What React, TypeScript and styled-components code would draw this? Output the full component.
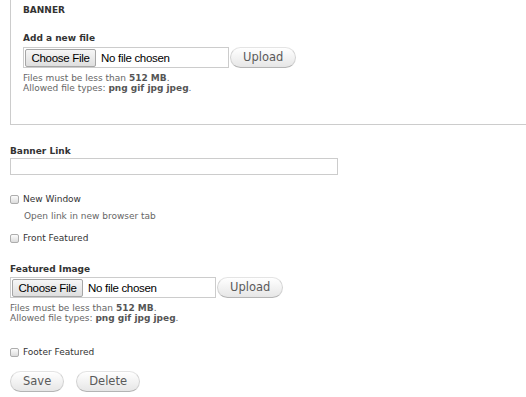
import React from 'react';
import styled, { createGlobalStyle } from 'styled-components';

const GlobalStyle = createGlobalStyle`
    body {
        margin: 0;
        background: #fff;
        font-family: 'DejaVu Sans', Verdana, sans-serif;
        font-size: 9px;
        color: #333;
        overflow: hidden;
    }
`;

const Page = styled.div`
    padding-left: 10px;
`;

const Fieldset = styled.section`
    border-left: 1px solid #ccc;
    border-bottom: 1px solid #ccc;
    padding: 4px 0 31px 12px;
`;

const Legend = styled.div`
    font-weight: bold;
    line-height: 12px;
    text-transform: uppercase;
    color: #333;
`;

const Label = styled.div<{ $top?: number; $bottom?: number }>`
    font-weight: bold;
    line-height: 12px;
    color: #333;
    margin-top: ${(p) => p.$top ?? 0}px;
    margin-bottom: ${(p) => p.$bottom ?? 0}px;
`;

const FileRow = styled.div`
    display: flex;
    align-items: center;
    gap: 1px;
`;

const FileBox = styled.div`
    box-sizing: border-box;
    width: 206px;
    height: 21px;
    border: 1px solid #ccc;
    padding: 0 1px;
    display: flex;
    align-items: center;
    gap: 5px;
    font-family: 'Liberation Sans', Arial, sans-serif;
    font-size: 11.5px;
    letter-spacing: -0.3px;
    color: #000;
`;

const FileButton = styled.span`
    box-sizing: border-box;
    width: 71px;
    height: 18px;
    display: flex;
    align-items: center;
    justify-content: center;
    border: 1px solid #a6a6a6;
    border-radius: 2px;
    background: linear-gradient(#f6f6f6, #dedede);
`;

const PillButton = styled.button`
    box-sizing: border-box;
    height: 21px;
    padding: 0 12px;
    border: 1px solid #e4e4e4;
    border-bottom-color: #b4b4b4;
    border-left-color: #d2d2d2;
    border-right-color: #d2d2d2;
    border-radius: 15px;
    background: linear-gradient(#ffffff, #e6e6e6);
    color: #5a5a5a;
    font-family: 'DejaVu Sans', Verdana, sans-serif;
    font-size: 11.5px;
    line-height: 1;
    cursor: pointer;
`;

const Description = styled.div<{ $top?: number; $indent?: number }>`
    color: #666;
    line-height: 10px;
    margin-top: ${(p) => p.$top ?? 0}px;
    padding-left: ${(p) => p.$indent ?? 0}px;
    b {
        color: #555;
    }
`;

const TextInput = styled.input`
    display: block;
    box-sizing: border-box;
    width: 328px;
    height: 17px;
    margin: 1px 0 0;
    border: 1px solid #ccc;
    padding: 0 3px;
    font: inherit;
`;

const CheckRow = styled.label<{ $top?: number }>`
    display: flex;
    align-items: center;
    line-height: 12px;
    color: #333;
    margin-top: ${(p) => p.$top ?? 0}px;
`;

const Box = styled.span`
    box-sizing: border-box;
    width: 9px;
    height: 9px;
    margin-right: 4px;
    border: 1px solid #adadad;
    border-radius: 2px;
    background: linear-gradient(#fcfcfc, #dcdcdc);
`;

const Actions = styled.div`
    display: flex;
    gap: 12px;
    margin-top: 13px;
`;

const UploadRow = ({ top }: { top: number }) => (
    <>
        <FileRow>
            <FileBox>
                <FileButton>Choose File</FileButton>
                <span>No file chosen</span>
            </FileBox>
            <PillButton>Upload</PillButton>
        </FileRow>
        <Description $top={top}>
            Files must be less than <b>512 MB</b>.
            <br />
            Allowed file types: <b>png gif jpg jpeg</b>.
        </Description>
    </>
);

const App = () => (
    <Page>
        <GlobalStyle />
        <Fieldset>
            <Legend>Banner</Legend>
            <Label $top={16} $bottom={3}>
                Add a new file
            </Label>
            <UploadRow top={5} />
        </Fieldset>

        <Label $top={20}>Banner Link</Label>
        <TextInput type="text" />

        <CheckRow $top={18}>
            <Box />
            New Window
        </CheckRow>
        <Description $top={6} $indent={14}>
            Open link in new browser tab
        </Description>
        <CheckRow $top={11}>
            <Box />
            Front Featured
        </CheckRow>

        <Label $top={19} $bottom={2}>
            Featured Image
        </Label>
        <UploadRow top={5} />

        <CheckRow $top={23}>
            <Box />
            Footer Featured
        </CheckRow>

        <Actions>
            <PillButton>Save</PillButton>
            <PillButton>Delete</PillButton>
        </Actions>
    </Page>
);

export default App;
